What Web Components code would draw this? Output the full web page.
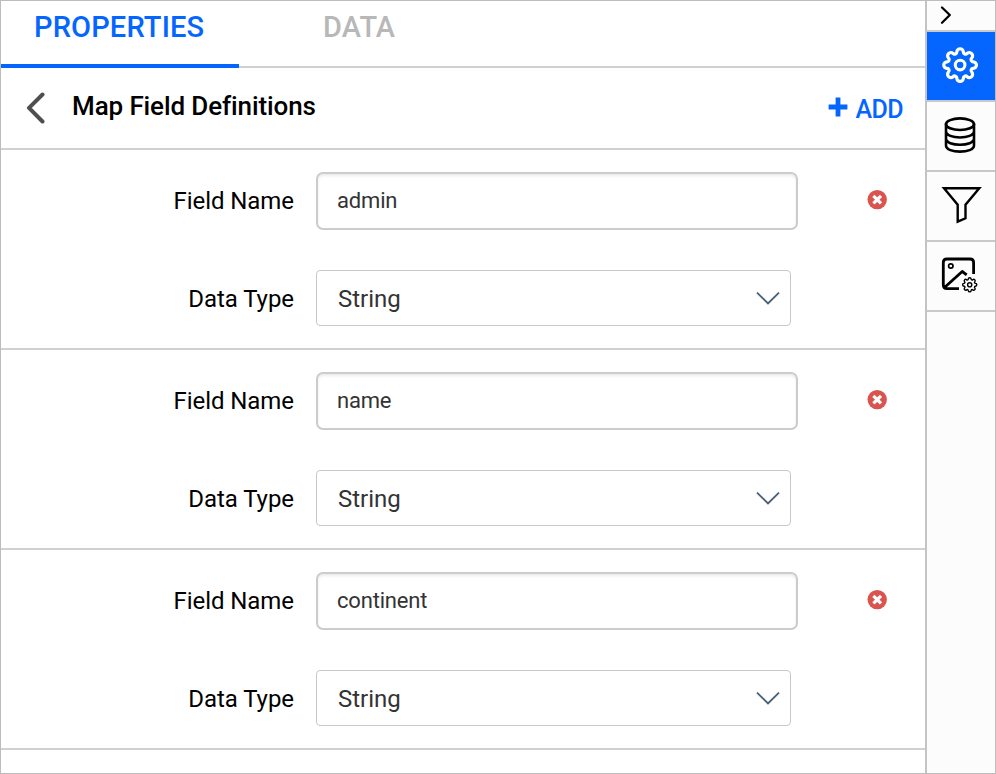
<!DOCTYPE html>
<html lang="en">
<head>
<meta charset="utf-8">
<title>Map Field Definitions</title>
<style>
  html, body { margin: 0; height: 100%; }
  body { font-family: Roboto, "Liberation Sans", sans-serif; overflow: hidden; }
</style>
</head>
<body>
<designer-panel>
  <tab-strip slot="main">
    <tab-item active>PROPERTIES</tab-item>
    <tab-item>DATA</tab-item>
  </tab-strip>
  <section-header slot="main">Map Field Definitions</section-header>
  <field-definition slot="main" name="admin" type="String"></field-definition>
  <field-definition slot="main" name="name" type="String"></field-definition>
  <field-definition slot="main" name="continent" type="String"></field-definition>
  <side-bar slot="side">
    <side-button icon="expand" small></side-button>
    <side-button icon="gear" active></side-button>
    <side-button icon="database"></side-button>
    <side-button icon="filter"></side-button>
    <side-button icon="image"></side-button>
  </side-bar>
</designer-panel>
<script>
const define = (name, markup, setup) => {
  const template = document.createElement('template');
  template.innerHTML = markup;
  customElements.define(name, class extends HTMLElement {
    constructor() {
      super();
      this.attachShadow({ mode: 'open' }).append(template.content.cloneNode(true));
    }
    connectedCallback() { if (setup) setup(this, this.shadowRoot); }
  });
};

// Eight-lobed cog around (cx, cy): round lobes joined by tangent concave arcs.
const cog = (cx, cy, scale) => {
  const D = 13.2 * scale, E = 13.9 * scale, rl = 3.2 * scale;
  const at = (r, a) => [r * Math.cos(a), r * Math.sin(a)];
  const step = Math.PI / 8;
  const [vx, vy] = at(E, step);
  const gap = Math.hypot(vx - D, vy), rv = gap - rl;
  const tx = D + (vx - D) * rl / gap, ty = vy * rl / gap;
  const tr = Math.hypot(tx, ty), ta = Math.atan2(ty, tx);
  const p = a => { const [x, y] = at(tr, a); return (cx + x).toFixed(2) + ' ' + (cy + y).toFixed(2); };
  let d = 'M' + p(-ta);
  for (let i = 0; i < 8; i++) {
    const a = i * 2 * step;
    d += `A${rl} ${rl} 0 0 1 ${p(a + ta)}A${rv} ${rv} 0 0 0 ${p(a + 2 * step - ta)}`;
  }
  return d + 'Z';
};

const icons = {
  expand: `<path d="M15 6.5 22.8 14 15 21.7" stroke-width="2.3"/>`,
  gear: `<path d="${cog(33.1, 33.1, 1.02)}" stroke-width="3.2"/><circle cx="33.1" cy="33.1" r="4.8" stroke-width="3.1"/>`,
  database: `<g stroke-width="2.6"><ellipse cx="33" cy="22.2" rx="14" ry="5.8"/><path d="M19 22V43.5C19 51.7 47 51.7 47 43.5V22M19 29.3C19 37.5 47 37.5 47 29.3M19 36.6C19 44.8 47 44.8 47 36.6"/></g>`,
  filter: `<path d="M17 16.3H52.3L38.5 32.8V46.3L30.7 49.6V32.8Z" stroke-width="2.4" stroke-linejoin="miter"/>`,
  image: `<path d="M32 46.6H20Q16.3 46.6 16.3 43V20.5Q16.3 17 20 17H43Q46.6 17 46.6 20.5V32M17.5 45.5 35.2 29.5 39.7 32.8" stroke-width="2.8" stroke-linecap="butt"/><circle cx="23.8" cy="24" r="2.2" stroke-width="1.7"/><path d="${cog(42.7, 42.8, 0.445)}" stroke-width="1.4"/><circle cx="42.7" cy="42.8" r="2.1" stroke-width="1.4"/>`
};

define('designer-panel', `
  <style>
    :host { display: grid; grid-template-columns: 924px 1fr; box-sizing: border-box; width: 996px; height: 774px; border: 1px solid #bdbdbd; background: #fff; color: #000; }
    .main { display: flex; flex-direction: column; }
    .side { display: grid; }
  </style>
  <div class="main"><slot name="main"></slot></div>
  <div class="side"><slot name="side"></slot></div>`);

define('tab-strip', `
  <style>
    :host { display: flex; box-sizing: border-box; height: 67px; background: linear-gradient(#d0d0d0, #d0d0d0) bottom / 100% 2px no-repeat; }
  </style><slot></slot>`);

define('tab-item', `
  <style>
    :host { display: block; box-sizing: border-box; height: 67px; padding: 9px 83px 0 84px; font: 500 29px/34px Roboto, sans-serif; letter-spacing: .15px; color: #b8b8b8; }
    :host([active]) { width: 238px; padding: 9px 0 0 33px; color: #0565ff; border-bottom: 4px solid #0565ff; }
  </style><slot></slot>`);

define('section-header', `
  <style>
    :host { display: flex; align-items: center; box-sizing: border-box; height: 82px; padding: 0 22px 2px 23px; border-bottom: 2px solid #d0d0d0; }
    h2 { margin: 0 auto 2px 24px; font: 500 26px/32px Roboto, sans-serif; letter-spacing: -.11px; }
    .add { display: flex; align-items: center; gap: 7px; margin-top: 5px; color: #0565ff; font: 500 25px/30px Roboto, sans-serif; letter-spacing: -.6px; }
    .add svg { margin: 0 0 5px -1px; }
    .add span { margin-left: 1px; }
    svg { display: block; }
  </style>
  <svg width="24" height="34" viewBox="0 0 24 34" fill="none" stroke="#4f4f4f" stroke-width="4" stroke-linecap="round" stroke-linejoin="round"><path d="M18.5 4.5 5 17.8 18.5 31.5"/></svg>
  <h2><slot></slot></h2>
  <div class="add">
    <svg width="20" height="20" viewBox="0 0 20 20" fill="#0565ff"><path d="M7.6 0.5h4.8v7.1h7v4.8h-7v7.1H7.6v-7.1h-7V7.6h7Z"/></svg>
    <span>ADD</span>
  </div>`);

define('field-definition', `
  <style>
    :host { display: grid; grid-template: 58px 56px / 293px 504px 1fr; gap: 40px 0; box-sizing: border-box; height: 200px; padding-top: 22px; border-bottom: 2px solid #d0d0d0; align-items: center; }
    label { text-align: right; font-size: 24px; line-height: 30px; letter-spacing: -.06px; }
    .type { padding-top: 2px; }
    .input, .select { box-sizing: border-box; display: flex; align-items: center; color: #333; }
    .input { margin-left: 22px; width: 482px; height: 58px; border: 2px solid #ccc; border-radius: 7px; padding: 0 0 2px 19px; box-shadow: inset 0 2px 3px rgba(0,0,0,.08); font-size: 22px; letter-spacing: -.18px; }
    .select { margin-left: 22px; width: 475px; height: 56px; border: 1px solid #c8c8c8; border-radius: 4px; padding: 1px 10px 0 21px; justify-content: space-between; font-size: 24px; }
    .remove { justify-self: start; margin: 0 0 2px 68px; }
    svg { display: block; }
  </style>
  <label>Field Name</label><div class="input"></div>
  <svg class="remove" width="22" height="22" viewBox="0 0 22 22"><circle cx="11.2" cy="10.6" r="9.7" fill="#d9534f"/><path d="m7.4 6.8 7.6 7.6m0-7.6-7.6 7.6" stroke="#fff" stroke-width="3.2"/></svg>
  <label class="type">Data Type</label><div class="select"><span></span>
  <svg width="24" height="16" viewBox="0 0 24 16" fill="none" stroke="#4a6078" stroke-width="1.9"><path d="M1 1.6 12 12.4 23 1.6"/></svg></div>`,
  (host, root) => {
    root.querySelector('.input').textContent = host.getAttribute('name');
    root.querySelector('.select span').textContent = host.getAttribute('type');
  });

define('side-bar', `
  <style>
    :host { display: flex; flex-direction: column; border-left: 2px solid #c4c4c4; background: #fcfcfc; }
  </style><slot></slot>`);

define('side-button', `
  <style>
    :host { display: block; height: 68px; border-bottom: 2px solid #c8c8c8; color: #000; overflow: hidden; }
    :host([small]) { height: 29px; }
    :host([active]) { background: #0565ff; color: #fff; }
    svg { display: block; fill: none; stroke: currentColor; stroke-linecap: round; stroke-linejoin: round; }
  </style><svg width="68" height="68" viewBox="0 0 68 68"></svg>`,
  (host, root) => { root.querySelector('svg').innerHTML = icons[host.getAttribute('icon')]; });
</script>
</body>
</html>
